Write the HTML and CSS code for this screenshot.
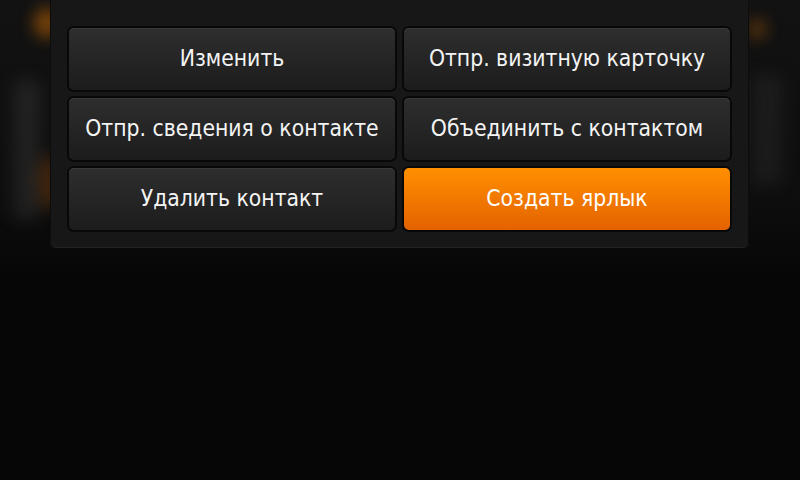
FILE: index.html
```html
<!DOCTYPE html>
<html lang="ru">
<head>
  <meta charset="UTF-8">
  <title>Контакт</title>
  <link rel="stylesheet" href="styles.css">
</head>
<body>
  <div class="backdrop">
    <span class="glow glow1"></span>
    <span class="glow glow2"></span>
    <span class="glow glow3"></span>
    <span class="shade shade1"></span>
    <span class="shade shade2"></span>
  </div>

  <!-- меню действий с контактом -->
  <div class="menu">
    <div class="menu-grid">
      <button class="item">Изменить</button>
      <button class="item">Отпр. визитную карточку</button>
      <button class="item">Отпр. сведения о контакте</button>
      <button class="item">Объединить с контактом</button>
      <button class="item">Удалить контакт</button>
      <button class="item active">Создать ярлык</button>
    </div>
  </div>
</body>
</html>
```

FILE: styles.css
```css
body {
  margin: 0;
  width: 800px;
  height: 480px;
  background: #060606;
  overflow: hidden;
  position: relative;
  font-family: "DejaVu Sans", "Open Sans", sans-serif;
}

/* размытый фон за меню */
.backdrop {
  position: absolute;
  top: 0; left: 0; right: 0;
  height: 280px;
  background: linear-gradient(#121212 0%, #0e0e0e 70%, #060606 100%);
}
.glow, .shade {
  position: absolute;
  border-radius: 50%;
  filter: blur(8px);
}
.glow1 { left: 34px; top: 8px; width: 26px; height: 30px; background: rgba(230,120,0,0.5); }
.glow2 { left: 36px; top: 155px; width: 24px; height: 55px; background: rgba(200,90,0,0.28); }
.glow3 { left: 748px; top: 20px; width: 18px; height: 18px; background: rgba(230,120,0,0.4); }
.shade1 { left: 14px; top: 80px; width: 26px; height: 140px; background: rgba(60,60,60,0.4); border-radius: 6px; }
.shade2 { left: 752px; top: 75px; width: 30px; height: 110px; background: rgba(45,45,45,0.4); border-radius: 6px; }

.menu {
  position: relative;
  width: 699px;
  margin-left: 50px;
  height: 248px;
  background: #171717;
  border-radius: 0 0 5px 5px;
  box-shadow: inset 1px 0 0 #0c0c0c, inset -1px 0 0 #0c0c0c, inset 0 -1px 0 #222;
  box-sizing: border-box;
  padding: 28px 19px 0 19px;
}
.menu-grid {
  display: grid;
  grid-template-columns: 326px 326px;
  grid-auto-rows: 62px;
  column-gap: 9px;
  row-gap: 8px;
}
.item {
  border: none;
  border-radius: 5px;
  background: linear-gradient(#2e2e2e, #1c1c1c);
  box-shadow: 0 0 0 2px #080808, inset 0 1px 0 #3a3a3a;
  color: #f4f4f4;
  font-family: inherit;
  font-size: 22.7px;
  font-stretch: condensed;
  padding: 0 0 2px 0;
  cursor: pointer;
}
.item.active {
  background: linear-gradient(#ff8f00, #e46200);
  box-shadow: 0 0 0 2px #080808;
  color: #fff;
}
```
